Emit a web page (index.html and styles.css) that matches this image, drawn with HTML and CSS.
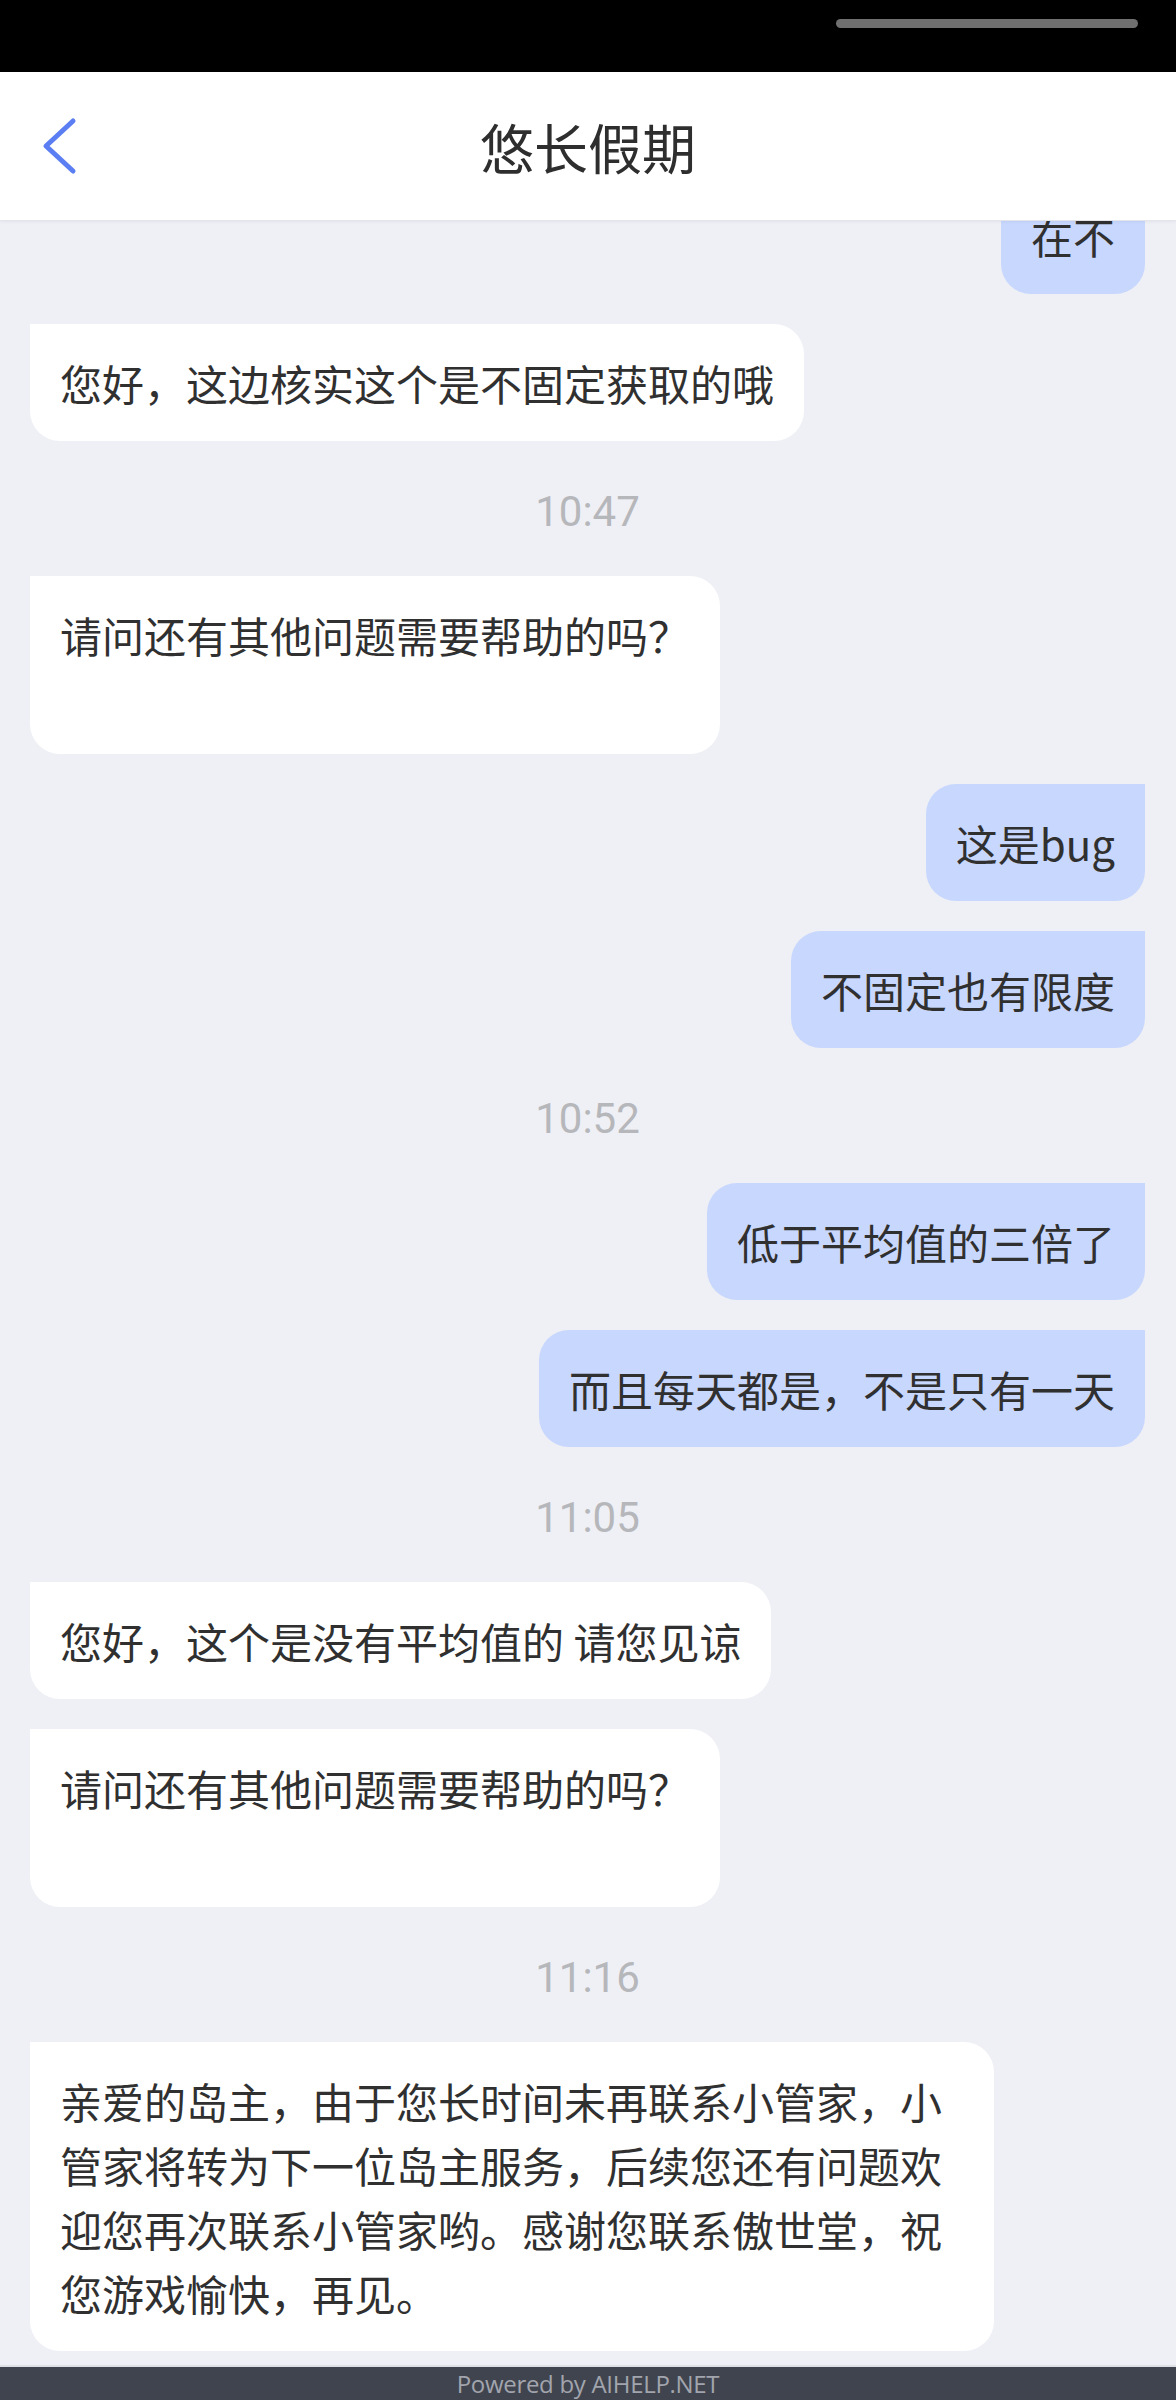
FILE: index.html
```html
<!DOCTYPE html>
<html lang="zh-CN">
<head>
<meta charset="utf-8">
<title>悠长假期</title>
<link rel="stylesheet" href="styles.css">
</head>
<body>
<div class="phone">
  <div class="statusbar"><div class="pill"></div></div>
  <header class="topbar">
    <div class="back">
      <svg class="back-icon" width="36" height="60" viewBox="0 0 36 60" aria-hidden="true">
        <polyline points="31,5 4,30 31,55" fill="none" stroke="#5b7ef3" stroke-width="5" stroke-linecap="round" stroke-linejoin="round"/>
      </svg>
    </div>
    <h1 class="title">悠长假期</h1>
    <div class="spacer"></div>
  </header>
  <main class="chat">
    <div class="msg me first">在不</div>
    <div class="msg them">您好，这边核实这个是不固定获取的哦</div>
    <div class="time">10:47</div>
    <div class="msg them tall">请问还有其他问题需要帮助的吗？<br>&nbsp;</div>
    <div class="msg me">这是bug</div>
    <div class="msg me">不固定也有限度</div>
    <div class="time">10:52</div>
    <div class="msg me">低于平均值的三倍了</div>
    <div class="msg me">而且每天都是，不是只有一天</div>
    <div class="time">11:05</div>
    <div class="msg them">您好，这个是没有平均值的 请您见谅</div>
    <div class="msg them tall">请问还有其他问题需要帮助的吗？<br>&nbsp;</div>
    <div class="time">11:16</div>
    <div class="msg them">亲爱的岛主，由于您长时间未再联系小管家，小管家将转为下一位岛主服务，后续您还有问题欢迎您再次联系小管家哟。感谢您联系傲世堂，祝您游戏愉快，再见。</div>
  </main>
  <footer class="powered">Powered by AIHELP.NET</footer>
</div>
</body>
</html>
```

FILE: styles.css
```css
* {
  box-sizing: border-box;
}

html, body {
  margin: 0;
  padding: 0;
  background: #eff0f5;
}

.phone {
  width: 1176px;
  height: 2400px;
  display: flex;
  flex-direction: column;
  overflow: hidden;
  font-family: "Noto Sans CJK SC", "Noto Sans", sans-serif;
}

.statusbar {
  height: 72px;
  flex: none;
  background: #000;
  display: flex;
  justify-content: flex-end;
  padding: 19px 38px 0 0;
}

.pill {
  width: 302px;
  height: 9px;
  border-radius: 5px;
  background: #707070;
}

.topbar {
  height: 149px;
  flex: none;
  background: #fff;
  border-bottom: 1px solid #e4e5ea;
  box-shadow: 0 1px 3px rgba(0, 0, 0, 0.05);
  display: grid;
  grid-template-columns: 1fr auto 1fr;
  align-items: center;
  position: relative;
  z-index: 2;
}

.back {
  padding-left: 42px;
  display: flex;
  align-items: center;
}

.back-icon {
  display: block;
}

.title {
  margin: 0;
  font-size: 54px;
  font-weight: 400;
  color: #2e2e2e;
  line-height: 1;
  padding-top: 2px;
}

.chat {
  flex: 1;
  min-height: 0;
  overflow: hidden;
  background: #eff0f5;
  display: flex;
  flex-direction: column;
  gap: 30px;
  padding: 0 31px 0 30px;
}

.msg {
  max-width: 964px;
  font-size: 42px;
  line-height: 64px;
  color: #303030;
  padding: 26.5px 30px;
  word-break: normal;
}

.msg.first {
  margin-top: -44px;
}

.them {
  align-self: flex-start;
  background: #ffffff;
  border-radius: 0 30px 30px 30px;
}

.me {
  align-self: flex-end;
  background: #c8d7fd;
  border-radius: 30px 0 30px 30px;
}

.msg.tall {
  padding-bottom: 23.5px;
}

.time {
  align-self: center;
  height: 75px;
  padding-top: 7px;
  line-height: 68px;
  font-family: Roboto, "Noto Sans", sans-serif;
  font-size: 42px;
  color: #b6b7bb;
}

.powered {
  flex: none;
  height: 35px;
  border-top: 2px solid #dfe0e5;
  background: #40444e;
  color: #a2a5ad;
  font-family: "Open Sans", "Noto Sans", sans-serif;
  font-size: 24px;
  line-height: 33px;
  text-align: center;
  letter-spacing: -0.3px;
}
```
